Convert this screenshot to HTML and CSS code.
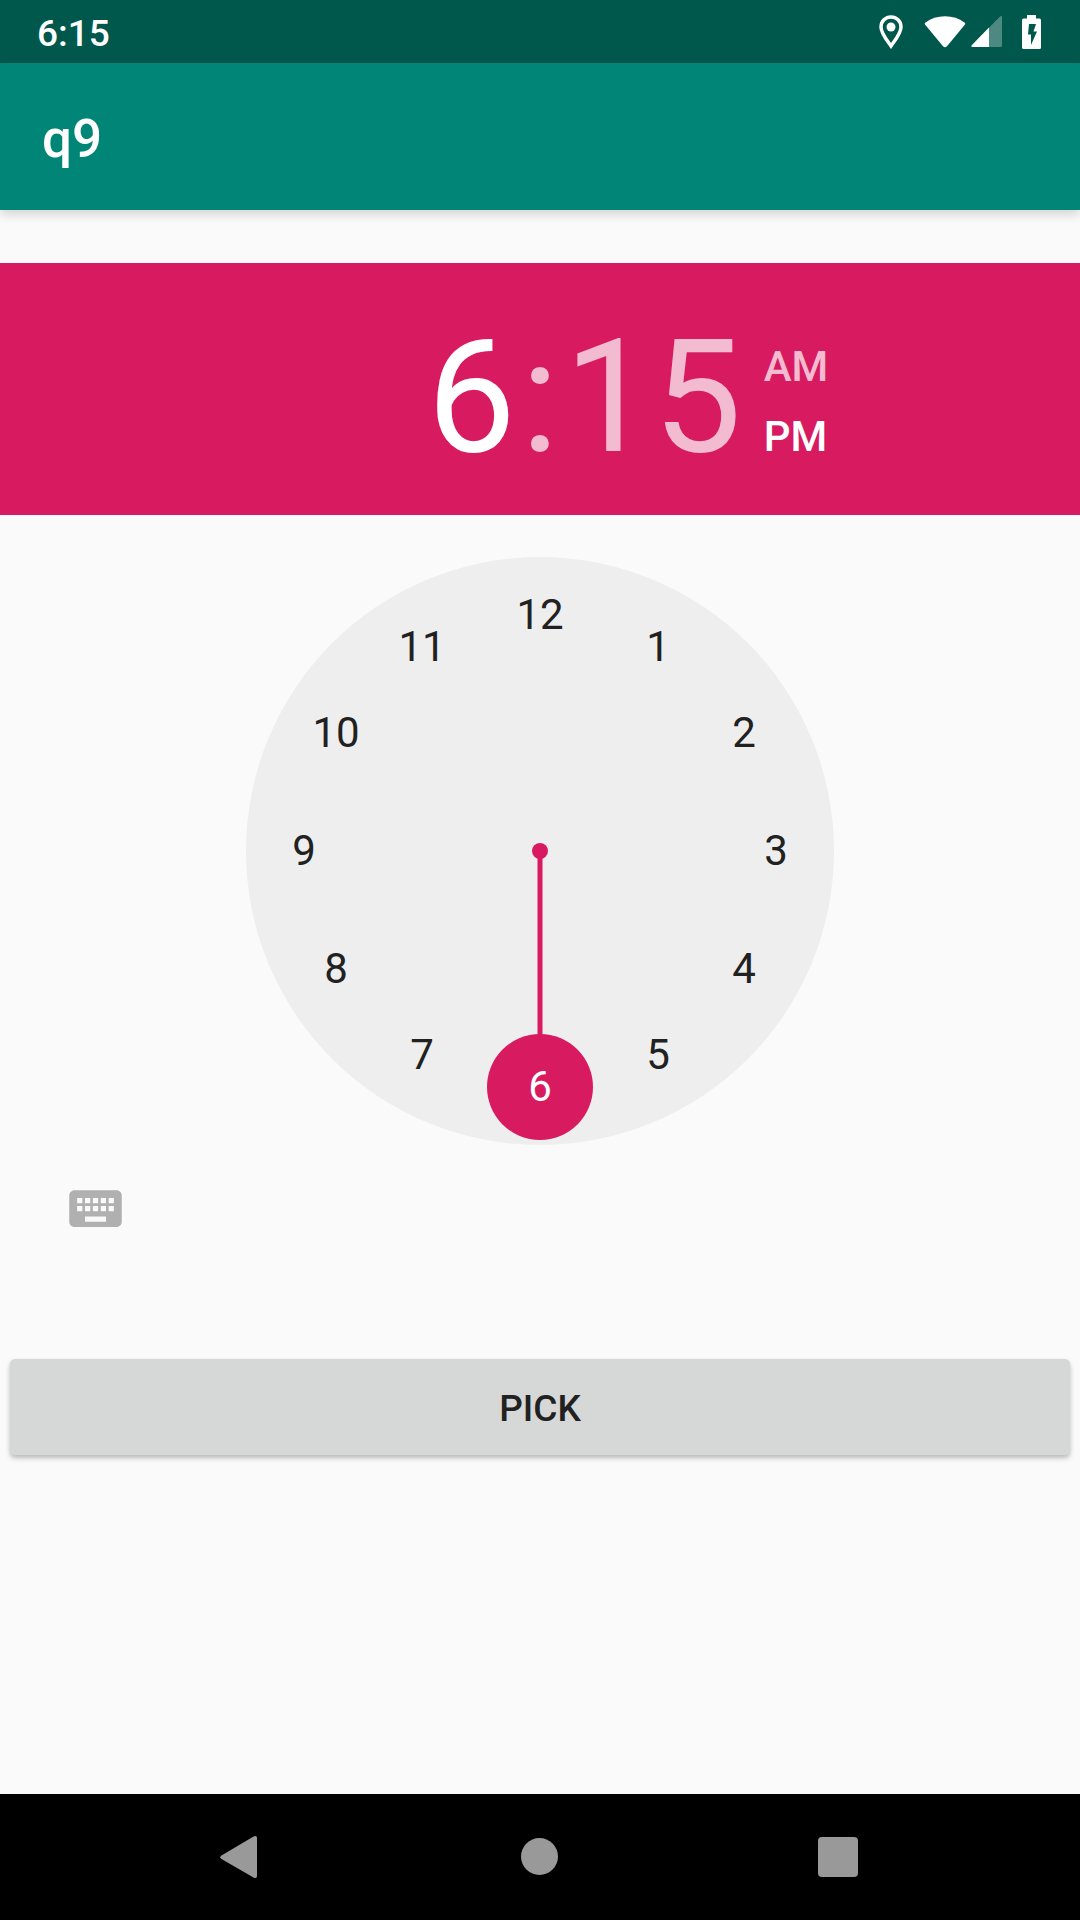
FILE: index.html
```html
<!DOCTYPE html>
<html lang="en">
<head>
<meta charset="utf-8">
<meta name="viewport" content="width=device-width, initial-scale=1">
<title>q9</title>
<link rel="stylesheet" href="styles.css">
</head>
<body>
<div class="status-bar">
  <span class="status-time">6:15</span>
  <div class="status-icons">
    <svg class="icon-location" width="24" height="34" viewBox="0 0 24 34" aria-hidden="true">
      <path d="M12 2C6.500 2 2 6.300 2 12C2 18.500 8.500 26 12 31C15.500 26 22 18.500 22 12C22 6.300 17.500 2 12 2Z" fill="none" stroke="#fff" stroke-width="3.500"/>
      <circle cx="12" cy="12" r="4.500" fill="#fff"/>
    </svg>
    <svg class="icon-wifi" width="42" height="32" viewBox="0 0 42 32" aria-hidden="true">
      <path d="M1.500 6.500C7 2.500 13.500 0.300 21 0.300S35 2.500 40.500 6.500Q41.800 7.500 40.800 8.800L23 30.300Q21 32.300 19 30.300L1.200 8.800Q0.200 7.500 1.500 6.500Z" fill="#fff"/>
    </svg>
    <svg class="icon-signal" width="32" height="32" viewBox="0 0 32 32" aria-hidden="true">
      <path d="M31 1.500V29.500Q31 31 29.500 31H1.500Q-0.500 31 1 29L28.500 1Q31 -1 31 1.500Z" fill="#fff" fill-opacity=".3"/>
      <path d="M18 11.500V31H1.500Q-0.500 31 1 29Z" fill="#fff"/>
    </svg>
    <svg class="icon-battery" width="20" height="34" viewBox="0 0 20 34" aria-hidden="true">
      <path d="M5 0H14V3.500H17.500Q19 3.500 19 5V32.500Q19 34 17.500 34H1.500Q0 34 0 32.500V5Q0 3.500 1.500 3.500H5ZM7 9L6 19.500H9V30L15 16.500H11.500L14 9Z" fill="#fff" fill-rule="evenodd"/>
    </svg>
  </div>
</div>
<header class="app-bar"><h1 class="app-title">q9</h1></header>
<main class="content">
  <section class="time-header" aria-label="Selected time">
    <button class="time-part hour" type="button">6</button>
    <span class="time-part">:</span>
    <div class="minute-group">
      <button class="time-part" type="button">15</button>
      <fieldset class="period">
        <label class="period-option"><input class="period-input" type="radio" name="period" value="am"><span>AM</span></label>
        <label class="period-option"><input class="period-input" type="radio" name="period" value="pm" checked><span>PM</span></label>
      </fieldset>
    </div>
  </section>
  <svg class="clock" viewBox="0 0 588 588" role="img" aria-label="Hour dial">
    <circle class="clock-face" cx="294" cy="294" r="294"/>
    <circle class="clock-accent" cx="294" cy="294" r="8"/>
    <path class="clock-hand" d="M294 294V480"/>
    <circle class="clock-accent" cx="294" cy="530" r="53"/>
    <g class="clock-numbers">
      <text x="294" y="72">12</text>
      <text x="412" y="104">1</text>
      <text x="498" y="190">2</text>
      <text x="530" y="308">3</text>
      <text x="498" y="426">4</text>
      <text x="412" y="512">5</text>
      <text class="selected" x="294" y="544">6</text>
      <text x="176" y="512">7</text>
      <text x="90" y="426">8</text>
      <text x="58" y="308">9</text>
      <text x="90" y="190">10</text>
      <text x="176" y="104">11</text>
    </g>
  </svg>
  <button class="keyboard-toggle" type="button" aria-label="Switch to text input">
    <svg width="63" height="63" viewBox="0 0 24 24" aria-hidden="true">
      <path d="M20 5H4c-1.100 0-1.990.9-1.990 2L2 17c0 1.100.9 2 2 2h16c1.100 0 2-.9 2-2V7c0-1.100-.9-2-2-2zm-9 3h2v2h-2V8zm0 3h2v2h-2v-2zM8 8h2v2H8V8zm0 3h2v2H8v-2zm-1 2H5v-2h2v2zm0-3H5V8h2v2zm9 7H8v-2h8v2zm0-4h-2v-2h2v2zm0-3h-2V8h2v2zm3 3h-2v-2h2v2zm0-3h-2V8h2v2z" fill="#b0b0b0"/>
    </svg>
  </button>
  <button class="pick-button" type="button">PICK</button>
</main>
<nav class="nav-bar" aria-label="System navigation">
  <button class="nav-button" type="button" aria-label="Back">
    <svg width="44" height="44" viewBox="0 0 44 44"><path d="M1.500 20.500L33.500 1.500Q37 0 37 3V41Q37 44 33.500 42.500L1.500 24Q-1 22 1.500 20.500Z" fill="#999"/></svg>
  </button>
  <button class="nav-button" type="button" aria-label="Home">
    <svg width="44" height="44" viewBox="0 0 44 44"><circle cx="21.500" cy="21.500" r="18.500" fill="#999"/></svg>
  </button>
  <button class="nav-button" type="button" aria-label="Recent apps">
    <svg width="44" height="44" viewBox="0 0 44 44"><rect x="2" y="2" width="40" height="40" rx="4" fill="#999"/></svg>
  </button>
</nav>
</body>
</html>
```
FILE: styles.css
```css
* {
  box-sizing: border-box;
}

body {
  margin: 0;
  min-height: 100vh;
  display: flex;
  flex-direction: column;
  background: #fafafa;
  color: #212121;
  font-family: Roboto, "Noto Sans", sans-serif;
}

button {
  margin: 0;
  padding: 0;
  border: 0;
  background: none;
  color: inherit;
  font: inherit;
}

svg {
  display: block;
}

.status-bar {
  display: flex;
  align-items: center;
  justify-content: space-between;
  height: 63px;
  padding: 0 38px 0 37px;
  background: #00574b;
  color: #fff;
}

.status-time {
  padding-top: 4px;
  font-size: 37px;
  font-weight: 500;
  line-height: 44px;
}

.status-icons {
  display: flex;
  align-items: center;
}

.icon-wifi {
  margin-left: 21px;
}

.icon-signal {
  margin-left: 5px;
}

.icon-battery {
  margin-left: 19px;
}

.app-bar {
  display: flex;
  align-items: center;
  height: 147px;
  padding: 0 42px;
  background: #008577;
  color: #fff;
  box-shadow: 0 4px 10px rgba(0, 0, 0, 0.16);
}

.app-title {
  margin: 0;
  padding-top: 5px;
  font-size: 53px;
  font-weight: 500;
  line-height: 62px;
}

.content {
  flex: 1;
  display: flex;
  flex-direction: column;
  padding-top: 53px;
}

.time-header {
  display: grid;
  grid-template-columns: 1fr auto 1fr;
  column-gap: 5px;
  align-items: center;
  height: 252px;
  padding-top: 15px;
  background: #d81b60;
  color: #f3bbd0;
}

.time-part {
  font-size: 158px;
  line-height: 186px;
}

.hour {
  justify-self: end;
  color: #fff;
}

.minute-group {
  display: flex;
  align-items: center;
}

.period {
  display: flex;
  flex-direction: column;
  gap: 20px;
  margin: 11px 0 0 22px;
  padding: 0;
  border: 0;
  font-size: 42px;
  font-weight: 500;
  line-height: 50px;
}

.period-option {
  display: flex;
}

.period-input {
  appearance: none;
  width: 0;
  margin: 0;
}

.period-input:checked + span {
  color: #fff;
}

.clock {
  align-self: center;
  width: 588px;
  max-width: 100%;
  margin-top: 42px;
}

.clock-face {
  fill: #eee;
}

.clock-accent {
  fill: #d81b60;
}

.clock-hand {
  stroke: #d81b60;
  stroke-width: 5px;
}

.clock-numbers {
  fill: #212121;
  font-size: 42px;
  text-anchor: middle;
}

.selected {
  fill: #fff;
}

.keyboard-toggle {
  align-self: flex-start;
  margin: 32px 64px 0;
}

.pick-button {
  height: 96px;
  margin: 119px 10px 0;
  padding-top: 4px;
  border-radius: 5px;
  background: #d6d8d7;
  box-shadow: 0 3px 5px rgba(0, 0, 0, 0.26);
  font-size: 37px;
  font-weight: 500;
  line-height: 44px;
}

.nav-bar {
  display: flex;
  align-items: center;
  justify-content: center;
  gap: 172px;
  height: 126px;
  background: #000;
}

.nav-button {
  display: flex;
  align-items: center;
  justify-content: center;
  width: 126px;
  height: 126px;
}
```
